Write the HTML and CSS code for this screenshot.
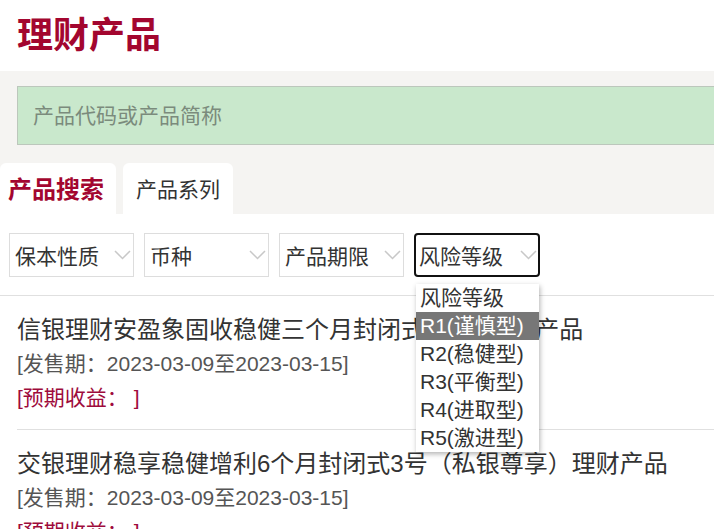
FILE: index.html
```html
<!DOCTYPE html>
<html lang="zh-CN">
<head>
	<meta charset="UTF-8">
	<meta name="viewport" content="width=device-width, initial-scale=1.0">
	<title>理财产品</title>
	<link rel="stylesheet" href="styles.css">
</head>
<body>
	<div class="page-header">
		<h1 class="page-title">理财产品</h1>
	</div>

	<div class="search-band">
		<div class="search-box">产品代码或产品简称</div>
		<div class="tabs">
			<div class="tab active">产品搜索</div>
			<div class="tab">产品系列</div>
		</div>
	</div>

	<div class="filters">
		<div class="filter-select">
			<span>保本性质</span>
			<svg class="chevron" width="17" height="10" viewBox="0 0 17 10"><path d="M1 1 L8.5 8.5 L16 1" fill="none" stroke="#c8c8c8" stroke-width="1.5"/></svg>
		</div>
		<div class="filter-select">
			<span>币种</span>
			<svg class="chevron" width="17" height="10" viewBox="0 0 17 10"><path d="M1 1 L8.5 8.5 L16 1" fill="none" stroke="#c8c8c8" stroke-width="1.5"/></svg>
		</div>
		<div class="filter-select">
			<span>产品期限</span>
			<svg class="chevron" width="17" height="10" viewBox="0 0 17 10"><path d="M1 1 L8.5 8.5 L16 1" fill="none" stroke="#c8c8c8" stroke-width="1.5"/></svg>
		</div>
		<div class="filter-select focused">
			<span>风险等级</span>
			<svg class="chevron" width="17" height="10" viewBox="0 0 17 10"><path d="M1 1 L8.5 8.5 L16 1" fill="none" stroke="#c8c8c8" stroke-width="1.5"/></svg>
			<ul class="dropdown">
				<li>风险等级</li>
				<li class="selected">R1(谨慎型)</li>
				<li>R2(稳健型)</li>
				<li>R3(平衡型)</li>
				<li>R4(进取型)</li>
				<li>R5(激进型)</li>
			</ul>
		</div>
	</div>

	<div class="product-list">
		<div class="product">
			<div class="product-name">信银理财安盈象固收稳健三个月封闭式112号理财产品</div>
			<div class="product-date">[发售期：2023-03-09至2023-03-15]</div>
			<div class="product-yield">[预期收益： ]</div>
		</div>
		<div class="product">
			<div class="product-name">交银理财稳享稳健增利6个月封闭式3号（私银尊享）理财产品</div>
			<div class="product-date">[发售期：2023-03-09至2023-03-15]</div>
			<div class="product-yield">[预期收益： ]</div>
		</div>
	</div>
</body>
</html>
```

FILE: styles.css
```css
body {
	margin: 0;
	font-family: "Liberation Sans", "Noto Sans CJK SC", sans-serif;
	color: #333;
	background: #fff;
	overflow: hidden;
}

.page-header {
	height: 71px;
	padding-left: 17px;
}

.page-title {
	margin: 0;
	font-size: 36px;
	line-height: 71px;
	font-weight: bold;
	color: #a3062f;
}

.search-band {
	background-color: #f5f4f2;
	padding: 15px 0 0 17px;
}

.search-box {
	height: 57px;
	line-height: 57px;
	padding-left: 15px;
	background-color: #c9e8cc;
	border: 1px solid #bcc7bc;
	border-right: none;
	font-size: 21px;
	color: #7b8b7c;
}

.tabs {
	display: flex;
	gap: 7px;
	margin: 18px 0 0 -17px;
}

.tab {
	height: 51px;
	line-height: 54px;
	padding: 0 13px;
	background-color: #fff;
	border-radius: 6px 6px 0 0;
	font-size: 21px;
	color: #333;
}

.tab.active {
	padding: 0 12px 0 8px;
	font-size: 24px;
	font-weight: bold;
	color: #a3062f;
}

.filters {
	display: flex;
	gap: 10px;
	padding: 19px 9px 18px;
	border-bottom: 1px solid #e0e0e0;
}

.filter-select {
	position: relative;
	box-sizing: border-box;
	width: 125px;
	height: 44px;
	display: flex;
	align-items: center;
	justify-content: space-between;
	padding: 0 2px 0 5px;
	border: 1px solid #ddd;
	font-size: 21px;
	color: #333;
}

.filter-select.focused {
	width: 126px;
	border: 2px solid #111;
	border-radius: 4px;
	padding: 0 1px 0 3px;
}

.chevron {
	display: block;
}

.dropdown {
	position: absolute;
	top: 49px;
	left: 0;
	width: 123px;
	margin: 0;
	padding: 0;
	list-style: none;
	background: #fff;
	box-shadow: 1px 2px 5px rgba(0, 0, 0, 0.3);
	z-index: 10;
}

.dropdown li {
	height: 28px;
	line-height: 28px;
	padding-left: 4px;
	font-size: 21px;
	color: #333;
	white-space: nowrap;
}

.dropdown li.selected {
	background-color: #777;
	color: #fff;
}

.product {
	margin-left: 17px;
	padding: 17px 0 14px;
	border-bottom: 1px solid #e0e0e0;
}

.product-name {
	font-size: 24px;
	line-height: 34px;
	color: #333;
	white-space: nowrap;
}

.product-date {
	font-size: 21px;
	line-height: 34px;
	color: #555;
}

.product-yield {
	font-size: 21px;
	line-height: 34px;
	color: #9e0b3c;
}
```
